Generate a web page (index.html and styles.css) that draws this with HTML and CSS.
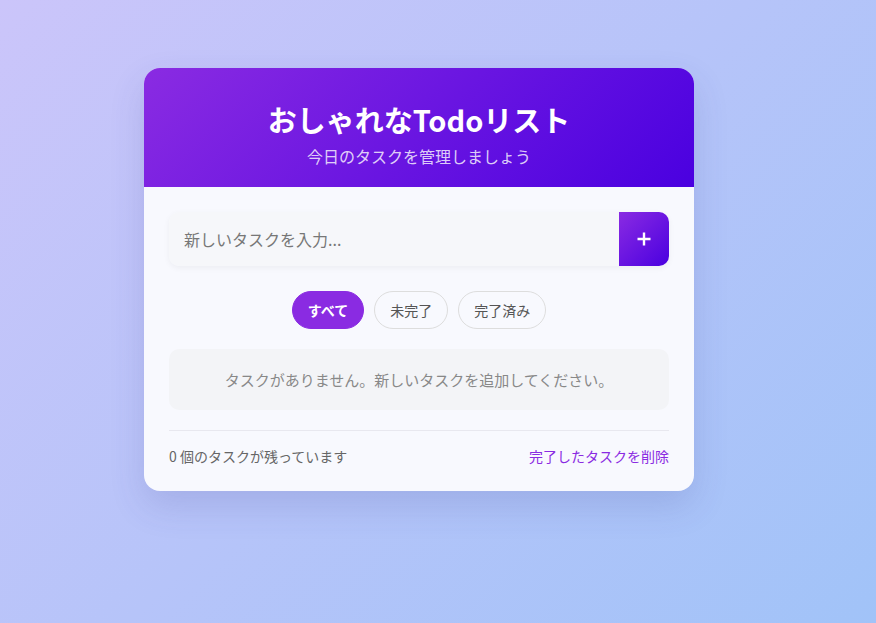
FILE: index.html
```html
<!DOCTYPE html>
<html lang="ja">
<head>
<meta charset="utf-8">
<title>おしゃれなTodoリスト</title>
<link rel="stylesheet" href="styles.css">
</head>
<body>
<div class="page">
  <div class="card">
    <header class="card-header">
      <h1 class="title">おしゃれなTodoリスト</h1>
      <p class="subtitle">今日のタスクを管理しましょう</p>
    </header>
    <div class="card-body">
      <div class="input-row">
        <input class="task-input" type="text" placeholder="新しいタスクを入力...">
        <button class="add-btn" aria-label="追加">
          <svg width="16" height="16" viewBox="0 0 16 16"><path d="M8 1.5v13M1.5 8h13" stroke="#fff" stroke-width="2.4" stroke-linecap="butt"/></svg>
        </button>
      </div>
      <div class="filters">
        <button class="filter active">すべて</button>
        <button class="filter">未完了</button>
        <button class="filter">完了済み</button>
      </div>
      <div class="empty">タスクがありません。新しいタスクを追加してください。</div>
      <div class="footer">
        <span class="count">0 個のタスクが残っています</span>
        <a class="clear" href="#">完了したタスクを削除</a>
      </div>
    </div>
  </div>
</div>
</body>
</html>
```

FILE: styles.css
```css
* { box-sizing: border-box; }
html, body { margin: 0; padding: 0; }
body {
  min-height: 100vh;
  background: linear-gradient(135deg, #cbc5fa 0%, #a1c3f8 100%);
  font-family: "Noto Sans CJK JP", "Noto Sans", sans-serif;
}
.page {
  padding: 68px 0 0 144px;
}
.card {
  width: 550px;
  background: #f8f9fe;
  border-radius: 16px;
  overflow: hidden;
  box-shadow: 0 15px 35px rgba(60, 60, 140, 0.16);
}
.card-header {
  background: linear-gradient(135deg, #8a2be2 0%, #4a00e0 100%);
  color: #fff;
  text-align: center;
  padding: 30px 20px 0;
  height: 119px;
}
.title {
  margin: 0;
  font-size: 29px;
  font-weight: 700;
  line-height: 42px;
}
.subtitle {
  margin: 5px 0 0;
  font-size: 16px;
  line-height: 22px;
  color: rgba(255, 255, 255, 0.8);
}
.card-body {
  padding: 25px 25px 25px;
}
.input-row {
  display: flex;
  height: 54px;
  border-radius: 10px;
  box-shadow: 0 2px 6px rgba(0, 0, 0, 0.05);
}
.task-input {
  flex: 1;
  border: none;
  outline: none;
  background: #f6f7fa;
  border-radius: 10px 0 0 10px;
  padding: 0 15px;
  font-family: inherit;
  font-size: 16px;
  color: #333;
}
.task-input::placeholder { color: #777; }
.add-btn {
  width: 50px;
  border: none;
  border-radius: 0 10px 10px 0;
  background: linear-gradient(135deg, #8a2be2 0%, #4a00e0 100%);
  display: flex;
  align-items: center;
  justify-content: center;
  padding: 0;
}
.filters {
  display: flex;
  justify-content: center;
  gap: 10px;
  margin-top: 25px;
}
.filter {
  font-family: inherit;
  font-size: 14px;
  line-height: 20px;
  padding: 8px 15px;
  border-radius: 20px;
  border: 1px solid #ddd;
  background: transparent;
  color: #555;
}
.filter.active {
  background: #8a2be2;
  border-color: #8a2be2;
  color: #fff;
  font-weight: 700;
}
.empty {
  margin-top: 20px;
  background: #f3f4f7;
  border-radius: 10px;
  padding: 20px;
  text-align: center;
  font-size: 15px;
  line-height: 21px;
  color: #888;
}
.footer {
  margin-top: 20px;
  border-top: 1px solid #e8e8ef;
  padding-top: 15px;
  display: flex;
  justify-content: space-between;
  align-items: center;
  font-size: 14px;
  line-height: 20px;
}
.count { color: #666; }
.clear {
  color: #8a2be2;
  text-decoration: none;
}
```
